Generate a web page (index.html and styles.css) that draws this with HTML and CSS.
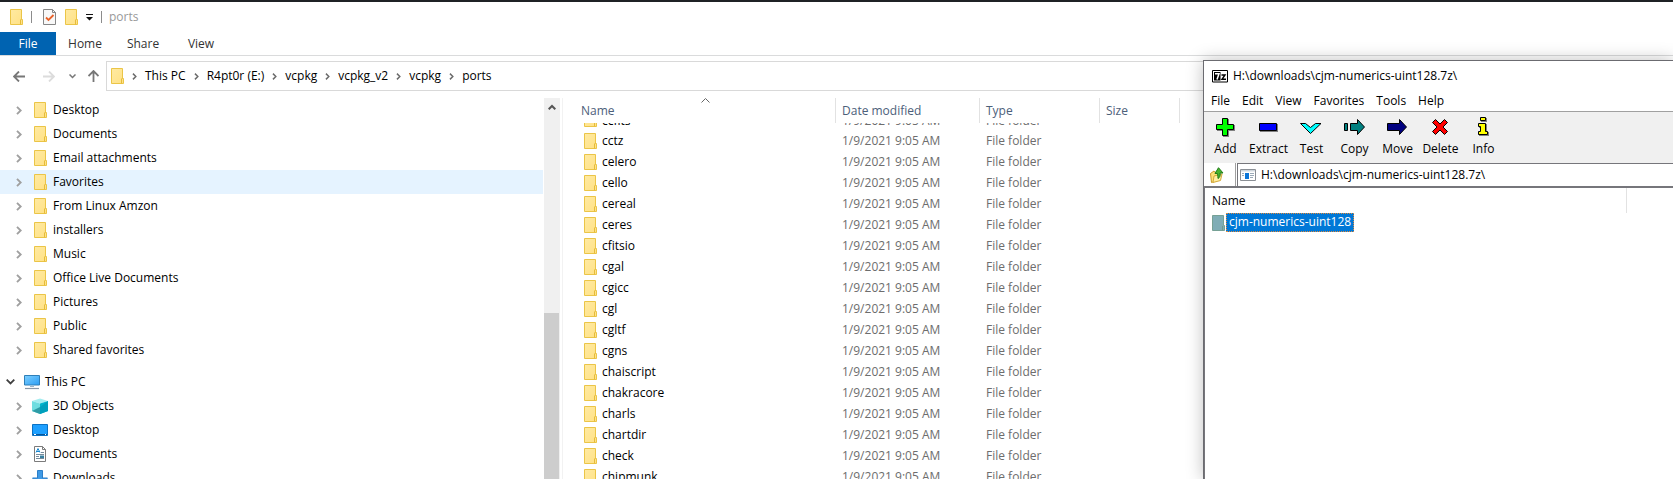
FILE: index.html
```html
<!DOCTYPE html>
<html lang="en">
<head>
<meta charset="utf-8">
<title>ports</title>
<link rel="stylesheet" href="styles.css">
</head>
<body>
<svg class="defs" aria-hidden="true">
  <defs>
    <linearGradient id="fg" x1="0" y1="0" x2="1" y2="1"><stop offset="0" stop-color="#ffeaa2"/><stop offset="1" stop-color="#ffe185"/></linearGradient>
    <linearGradient id="scr" x1="0" y1="0" x2="1" y2="1"><stop offset="0" stop-color="#7fd0ff"/><stop offset="1" stop-color="#2a9df4"/></linearGradient>
  </defs>
  <symbol id="folder" viewBox="0 0 13 16"><path d="M.5.5h11v10h1v5H.5z" fill="url(#fg)" stroke="#ebc547"/><path d="M10.500 15.500v-4.500l1-1" fill="none" stroke="#e6bb3a"/></symbol>
  <symbol id="chev" viewBox="0 0 6 9"><path d="M1 .8 4.700 4.500 1 8.200" fill="none" stroke="currentColor" stroke-width="1.900"/></symbol>
</svg>

<main class="explorer">
  <header class="titlebar">
    <svg class="folder"><use href="#folder"/></svg>
    <span class="bar"></span>
    <button class="plain" aria-label="Properties"><svg width="13" height="16" viewBox="0 0 13 16"><path d="M.5.500h9l3 3v12H.5z" fill="#f8f8f8" stroke="#868686"/><path d="M9.500.500v3h3" fill="none" stroke="#868686"/><path d="M3 8.500 5.500 11 10.500 6" fill="none" stroke="#e8622a" stroke-width="1.800"/></svg></button>
    <button class="plain" aria-label="New folder"><svg class="folder"><use href="#folder"/></svg></button>
    <button class="plain customize" aria-label="Customize Quick Access Toolbar"><svg width="7" height="7" viewBox="0 0 7 7"><path d="M0 0h7v1H0zM0 3h7L3.500 6.500z" fill="#111"/></svg></button>
    <span class="bar"></span>
    <span class="title">ports</span>
  </header>
  <nav class="tabs">
    <button class="tab file">File</button><button class="tab">Home</button><button class="tab">Share</button><button class="tab">View</button>
  </nav>
  <div class="navrow">
    <div class="arrows">
      <button class="plain" aria-label="Back"><svg width="12" height="11" viewBox="0 0 12 11"><path d="M12 5.500H1M6 .5 1 5.500l5 5" fill="none" stroke="#777" stroke-width="1.800"/></svg></button>
      <button class="plain forward" aria-label="Forward"><svg width="12" height="11" viewBox="0 0 12 11"><path d="M0 5.500h11M6 .5l5 5-5 5" fill="none" stroke="#dcdcdc" stroke-width="1.800"/></svg></button>
      <button class="plain recent" aria-label="Recent locations"><svg width="7" height="5" viewBox="0 0 7 5"><path d="M.5.500 3.500 3.500l3-3" fill="none" stroke="#777" stroke-width="1.500"/></svg></button>
      <button class="plain up" aria-label="Up"><svg width="11" height="12" viewBox="0 0 11 12"><path d="M5.500 12V1M.5 6l5-5 5 5" fill="none" stroke="#777" stroke-width="1.800"/></svg></button>
    </div>
    <div class="crumbs">
      <svg class="folder"><use href="#folder"/></svg>
      <svg class="sep"><use href="#chev"/></svg><a href="#">This PC</a>
      <svg class="sep"><use href="#chev"/></svg><a href="#">R4pt0r (E:)</a>
      <svg class="sep"><use href="#chev"/></svg><a href="#">vcpkg</a>
      <svg class="sep"><use href="#chev"/></svg><a href="#">vcpkg_v2</a>
      <svg class="sep"><use href="#chev"/></svg><a href="#">vcpkg</a>
      <svg class="sep"><use href="#chev"/></svg><a href="#">ports</a>
    </div>
  </div>
  <div class="content">
    <ul class="tree">
      <li><svg class="exp"><use href="#chev"/></svg><svg class="folder"><use href="#folder"/></svg>Desktop</li>
      <li><svg class="exp"><use href="#chev"/></svg><svg class="folder"><use href="#folder"/></svg>Documents</li>
      <li><svg class="exp"><use href="#chev"/></svg><svg class="folder"><use href="#folder"/></svg>Email attachments</li>
      <li class="hover"><svg class="exp"><use href="#chev"/></svg><svg class="folder"><use href="#folder"/></svg>Favorites</li>
      <li><svg class="exp"><use href="#chev"/></svg><svg class="folder"><use href="#folder"/></svg>From Linux Amzon</li>
      <li><svg class="exp"><use href="#chev"/></svg><svg class="folder"><use href="#folder"/></svg>installers</li>
      <li><svg class="exp"><use href="#chev"/></svg><svg class="folder"><use href="#folder"/></svg>Music</li>
      <li><svg class="exp"><use href="#chev"/></svg><svg class="folder"><use href="#folder"/></svg>Office Live Documents</li>
      <li><svg class="exp"><use href="#chev"/></svg><svg class="folder"><use href="#folder"/></svg>Pictures</li>
      <li><svg class="exp"><use href="#chev"/></svg><svg class="folder"><use href="#folder"/></svg>Public</li>
      <li><svg class="exp"><use href="#chev"/></svg><svg class="folder"><use href="#folder"/></svg>Shared favorites</li>
      <li class="root"><svg class="open" viewBox="0 0 9 6"><path d="M.7.700 4.500 4.500 8.300.700" fill="none" stroke="#404040" stroke-width="1.800"/></svg><svg class="ico" viewBox="0 0 16 16"><path d="M.5 1.500h15v9.500H.5z" fill="url(#scr)" stroke="#2f7fb8"/><path d="M6 12h4v1H6z" fill="#9fb4c4"/><path d="M1 14.500h14" stroke="#8797a8" stroke-width="1.200"/></svg>This PC</li>
      <li><svg class="exp"><use href="#chev"/></svg><svg class="ico" viewBox="0 0 16 16"><path d="M0 3 8 .500 16 3 8 5.500z" fill="#a5edf0"/><path d="M0 3l8 2.500V16l-8-3z" fill="#6fdde0"/><path d="M16 3 8 5.500V16l8-3z" fill="#00b4cc"/><path d="M0 13 8 9V16z" fill="#2f9ca6"/><path d="M8 9l8-6v10l-8 3z" fill="#009fbc"/></svg>3D Objects</li>
      <li><svg class="exp"><use href="#chev"/></svg><svg class="ico" viewBox="0 0 16 16"><path d="M.5 2.500h15v11H.5z" fill="#1ea0ff" stroke="#0b72c4"/><path d="M1 12.500h14" stroke="#07569a"/><path d="M2 12.500h2M13 12.500h1" stroke="#fff"/></svg>Desktop</li>
      <li><svg class="exp"><use href="#chev"/></svg><svg class="ico" viewBox="0 0 16 16"><path d="M2.500.500h8l3 3v12h-11z" fill="#fff" stroke="#7b7b7b"/><path d="M10.500.500v3h3" fill="none" stroke="#7b7b7b"/><path d="M4 6.500 6 2.500l2 4M4.500 5.500h3" fill="none" stroke="#1687d0"/><path d="M9 6.500h3M4 8.500h8M4 10.500h3M4 12.500h8" stroke="#778b9b"/><path d="M8 9.500h4v2.500H8z" fill="#387f9f"/></svg>Documents</li>
      <li><svg class="exp"><use href="#chev"/></svg><svg class="ico" viewBox="0 0 16 16"><path d="M5.500.500h5V8h5L8 15.500.500 8h5z" fill="#3f9ae5" stroke="#2c7fc9"/></svg>Downloads</li>
    </ul>
    <div class="scroll"><svg width="8" height="6" viewBox="0 0 8 6"><path d="M.7 5.300 4 2l3.300 3.300" fill="none" stroke="#555" stroke-width="2"/></svg><span class="thumb"></span></div>
    <table class="files">
      <thead><tr><th class="c-name">Name<svg class="sort" viewBox="0 0 9 5"><path d="M.5 4.500l4-4 4 4" fill="none" stroke="#666"/></svg></th><th class="c-date">Date modified</th><th class="c-type">Type</th><th class="c-size">Size</th><th class="c-rest"></th></tr></thead>
      <tbody>
        <tr class="cut"><td><div class="nm"><svg class="folder"><use href="#folder"/></svg><span>ccfits</span></div></td><td><div><span>1/9/2021 9:05 AM</span></div></td><td><div><span>File folder</span></div></td><td></td><td></td></tr>
        <tr><td><div class="nm"><svg class="folder"><use href="#folder"/></svg><span>cctz</span></div></td><td>1/9/2021 9:05 AM</td><td>File folder</td><td></td><td></td></tr>
        <tr><td><div class="nm"><svg class="folder"><use href="#folder"/></svg><span>celero</span></div></td><td>1/9/2021 9:05 AM</td><td>File folder</td><td></td><td></td></tr>
        <tr><td><div class="nm"><svg class="folder"><use href="#folder"/></svg><span>cello</span></div></td><td>1/9/2021 9:05 AM</td><td>File folder</td><td></td><td></td></tr>
        <tr><td><div class="nm"><svg class="folder"><use href="#folder"/></svg><span>cereal</span></div></td><td>1/9/2021 9:05 AM</td><td>File folder</td><td></td><td></td></tr>
        <tr><td><div class="nm"><svg class="folder"><use href="#folder"/></svg><span>ceres</span></div></td><td>1/9/2021 9:05 AM</td><td>File folder</td><td></td><td></td></tr>
        <tr><td><div class="nm"><svg class="folder"><use href="#folder"/></svg><span>cfitsio</span></div></td><td>1/9/2021 9:05 AM</td><td>File folder</td><td></td><td></td></tr>
        <tr><td><div class="nm"><svg class="folder"><use href="#folder"/></svg><span>cgal</span></div></td><td>1/9/2021 9:05 AM</td><td>File folder</td><td></td><td></td></tr>
        <tr><td><div class="nm"><svg class="folder"><use href="#folder"/></svg><span>cgicc</span></div></td><td>1/9/2021 9:05 AM</td><td>File folder</td><td></td><td></td></tr>
        <tr><td><div class="nm"><svg class="folder"><use href="#folder"/></svg><span>cgl</span></div></td><td>1/9/2021 9:05 AM</td><td>File folder</td><td></td><td></td></tr>
        <tr><td><div class="nm"><svg class="folder"><use href="#folder"/></svg><span>cgltf</span></div></td><td>1/9/2021 9:05 AM</td><td>File folder</td><td></td><td></td></tr>
        <tr><td><div class="nm"><svg class="folder"><use href="#folder"/></svg><span>cgns</span></div></td><td>1/9/2021 9:05 AM</td><td>File folder</td><td></td><td></td></tr>
        <tr><td><div class="nm"><svg class="folder"><use href="#folder"/></svg><span>chaiscript</span></div></td><td>1/9/2021 9:05 AM</td><td>File folder</td><td></td><td></td></tr>
        <tr><td><div class="nm"><svg class="folder"><use href="#folder"/></svg><span>chakracore</span></div></td><td>1/9/2021 9:05 AM</td><td>File folder</td><td></td><td></td></tr>
        <tr><td><div class="nm"><svg class="folder"><use href="#folder"/></svg><span>charls</span></div></td><td>1/9/2021 9:05 AM</td><td>File folder</td><td></td><td></td></tr>
        <tr><td><div class="nm"><svg class="folder"><use href="#folder"/></svg><span>chartdir</span></div></td><td>1/9/2021 9:05 AM</td><td>File folder</td><td></td><td></td></tr>
        <tr><td><div class="nm"><svg class="folder"><use href="#folder"/></svg><span>check</span></div></td><td>1/9/2021 9:05 AM</td><td>File folder</td><td></td><td></td></tr>
        <tr><td><div class="nm"><svg class="folder"><use href="#folder"/></svg><span>chipmunk</span></div></td><td>1/9/2021 9:05 AM</td><td>File folder</td><td></td><td></td></tr>
      </tbody>
    </table>
  </div>
</main>

<section class="archiver">
  <header class="a-title">
    <svg width="16" height="13" viewBox="0 0 16 13"><path d="M.5.500h15v11.500H.5z" fill="#fff" stroke="#000"/><path d="M2 2h6.500v8.500H2z"/><path d="M3 3.700h4L5 9.500" fill="none" stroke="#fff" stroke-width="1.500"/><path d="M9.500 5h3.500l-3 4.300h4" fill="none" stroke="#000" stroke-width="1.400"/></svg>
    <span>H:\downloads\cjm-numerics-uint128.7z\</span>
  </header>
  <nav class="a-menu"><button>File</button><button>Edit</button><button>View</button><button>Favorites</button><button>Tools</button><button>Help</button></nav>
  <div class="a-tools">
    <button><svg viewBox="1 0 24 20"><path d="M10 2h6v6h6v6h-6v6h-6v-6H4V8h6z" fill="#808080"/><path d="M9.500 1.500h5v6h6v5h-6v6h-5v-6h-6v-5h6z" fill="#0f0" stroke="#000"/></svg>Add</button>
    <button><svg viewBox="1 0 24 20"><path d="M4 7h18v8H4z" fill="#808080"/><path d="M3.500 6.500h17v7h-17z" fill="#00f" stroke="#000"/></svg>Extract</button>
    <button><svg viewBox="1 0 24 20"><path d="M1.500 6.500h5l5 4 5-4h5.500l-10.500 10z" fill="#0ff" stroke="#000"/></svg>Test</button>
    <button><svg viewBox="1 0 24 20"><path d="M2.500 6.500h3v7h-3zM8.500 6.500h7V2.500l7 7.500-7 7.500v-4h-7z" fill="#008080" stroke="#000"/></svg>Copy</button>
    <button><svg viewBox="1 0 24 20"><path d="M2.500 6.500h12V2.500l7 7.500-7 7.500v-4h-12z" fill="#000080" stroke="#000"/></svg>Move</button>
    <button><svg viewBox="1 0 24 20"><path d="M7.500 2.500 12 7l4.500-4.500 3 3L15 10l4.500 4.500-3 3L12 13l-4.500 4.500-3-3L9 10 4.500 5.500z" fill="red" stroke="#000"/></svg>Delete</button>
    <button><svg viewBox="1 0 24 20"><path d="M10 1h6v4h-6zM8 7h8v8h2v4H8v-4h2v-4H8z" fill="#808080"/><path d="M9.500.500h5v3h-5zM7.500 6.500h7v8h2v3h-9v-3h2v-5h-2z" fill="#ff0" stroke="#000"/></svg>Info</button>
  </div>
  <div class="a-addr">
    <button class="plain a-up" aria-label="Up one level"><svg width="14" height="16" viewBox="0 0 14 16"><path d="M.5 6.500 4 4l1 1.500 4-1.500v9L1.500 15.500z" fill="#fbe17a" stroke="#c99b28"/><path d="M3 15.500 4 9l8-2-1.500 6.500z" fill="#ffefa5" stroke="#d5aa3a"/><path d="M8 11.500c2-1 2.500-3 2-5.500h3L8.500.700 5 6.500h2.500c.5 2 .3 3.500.500 5z" fill="#48b32f" stroke="#207c17"/></svg></button>
    <div class="a-path"><svg width="16" height="12" viewBox="0 0 16 12"><path d="M.5.500h15v11H.5z" fill="#fff" stroke="#8a8f95"/><path d="M1 1h14v1.500H1z" fill="#cfd6dc"/><path d="M5 4h4v6H5z" fill="#0c76d8"/><path d="M10 4.500h4M10 6.500h4M10 8.500h3M2 4.500h2M2 6.500h2" stroke="#9aaab8"/></svg><input aria-label="Path" value="H:\downloads\cjm-numerics-uint128.7z\"></div>
  </div>
  <div class="a-list">
    <div class="a-head"><span>Name</span></div>
    <div class="a-item"><svg width="13" height="16" viewBox="0 0 13 16"><path d="M.5.500h11v10h1v5H.5z" fill="#7fadb6" stroke="#76a195"/><path d="M10.500 15.500v-4.500" stroke="#709c8c"/></svg><span class="selected">cjm-numerics-uint128</span></div>
  </div>
</section>
</body>
</html>
```

FILE: styles.css
```css
* { box-sizing: border-box; }
body { margin: 0; height: 100vh; overflow: hidden; position: relative; background: #fff; color: #000; font: 12px/16px "Segoe UI", "Open Sans", sans-serif; }
button, input { font: inherit; color: inherit; border: 0; padding: 0; margin: 0; background: none; }
svg { display: block; flex: none; }
.defs { position: absolute; width: 0; height: 0; }
.folder { width: 13px; height: 16px; }
.plain { display: flex; align-items: center; }

.explorer { display: flex; flex-direction: column; height: 100%; border-top: 2px solid #1f2225; }
.titlebar { display: flex; align-items: center; height: 30px; padding-left: 10px; flex: none; }
.titlebar .bar { width: 1px; height: 12px; background: #8c8c8c; margin: 0 11px 0 8px; }
.titlebar .plain + .plain { margin-left: 9px; }
.titlebar .plain + .customize { margin-left: 8px; }
.titlebar .customize + .bar { margin: 0 7px 0 8px; }
.title { color: #999; }
.tabs { display: flex; flex: none; border-bottom: 1px solid #dadbdc; }
.tab { height: 23px; width: 58px; color: #333; text-align: center; }
.tab.file { width: 56px; background: #0063b1; color: #fff; }
.navrow { display: flex; flex: none; padding: 5px 0 7px; }
.arrows { display: flex; align-items: center; width: 106px; padding-left: 13px; }
.forward { margin-left: 18px; }
.recent { margin-left: 14px; }
.up { margin-left: 12px; }
.crumbs { display: flex; flex: 1; align-items: center; height: 30px; border: 1px solid #d9d9d9; padding-left: 4px; }
.crumbs a { color: inherit; text-decoration: none; }
.sep { width: 5px; height: 7px; margin: 0 8px; color: #6b6b6b; }

.content { display: flex; flex: 1; min-height: 0; overflow: hidden; }
.tree { list-style: none; margin: 0; padding: 0 1px 0 0; width: 544px; flex: none; }
.tree li { display: flex; align-items: center; height: 24px; padding-left: 16px; }
.tree li.hover { background: #e5f3ff; }
.tree li.root { margin-top: 8px; padding-left: 6px; }
.exp { width: 6px; height: 9px; color: #a0a0a0; }
.tree .folder { margin: 0 6px 0 12px; }
.ico { width: 16px; height: 16px; margin: 0 5px 0 10px; }
.open { width: 9px; height: 6px; }
.root .ico { margin-left: 9px; }
.scroll { display: flex; flex-direction: column; width: 16px; background: #f0f0f0; flex: none; padding: 6px 1px 0 0; }
.scroll svg { align-self: center; margin-bottom: 203px; }
.thumb { flex: 1; background: #cdcdcd; }

.files { flex: 1; table-layout: fixed; border-collapse: separate; border-spacing: 0; margin-left: 2px; border-left: 1px solid #f2f2f2; align-self: flex-start; }
.files th { position: relative; height: 25px; padding: 0 0 0 6px; border-right: 1px solid #e2e2e2; text-align: left; font-weight: 400; color: #4c607a; }
.files .c-name { width: 273px; padding-left: 18px; }
.files .c-date { width: 144px; }
.files .c-type { width: 120px; }
.files .c-size { width: 80px; }
.files .c-rest { border: 0; }
.sort { position: absolute; top: 0; left: 138px; width: 9px; height: 5px; }
.files td { height: 21px; padding: 0 0 0 6px; color: #6d6d6d; white-space: nowrap; }
.files td:first-child { padding-left: 21px; color: #000; }
.nm { display: flex; align-items: center; gap: 5px; }
.files .cut td { height: 7px; }
.cut div { display: flex; align-items: flex-end; height: 7px; padding-bottom: 3px; overflow: hidden; }
.cut span { line-height: 12px; }

.archiver { position: absolute; left: 1203px; right: 0; top: 60px; bottom: 0; display: flex; flex-direction: column; background: #fff; border: solid #6b6b70; border-width: 1px 0 0 1px; box-shadow: 0 0 16px rgba(0, 0, 0, .25); }
.a-title { display: flex; align-items: center; gap: 5px; height: 30px; padding-left: 8px; }
.a-menu { display: flex; gap: 12px; height: 21px; padding-left: 7px; border-bottom: 1px solid #a0a0a0; }
.a-tools { display: flex; height: 51px; padding-top: 5px; background: #f0f0f0; }
.a-tools button { display: flex; flex-direction: column; align-items: center; width: 43px; gap: 4px; }
.a-tools svg { width: 24px; height: 20px; }
.a-addr { display: flex; height: 23px; }
.a-up { width: 32px; padding-left: 6px; border-right: 1px solid #a0a0a0; margin-right: 1px; }
.a-path { display: flex; flex: 1; align-items: center; gap: 5px; padding-left: 2px; border: solid #76767b; border-width: 1px 0 0 1px; }
.a-path input { flex: 1; outline: 0; }
.a-list { flex: 1; border: solid #76767b; border-width: 2px 0 0 1px; padding-left: 7px; }
.a-head { height: 25px; width: 415px; padding-top: 5px; border-right: 1px solid #e2e2e2; }
.a-item { display: flex; align-items: center; gap: 1px; }
.selected { height: 19px; padding: 1px 3px 0 3px; background: #0078d7; color: #fff; outline: 1px dotted #e08a3c; outline-offset: -1px; }
```
